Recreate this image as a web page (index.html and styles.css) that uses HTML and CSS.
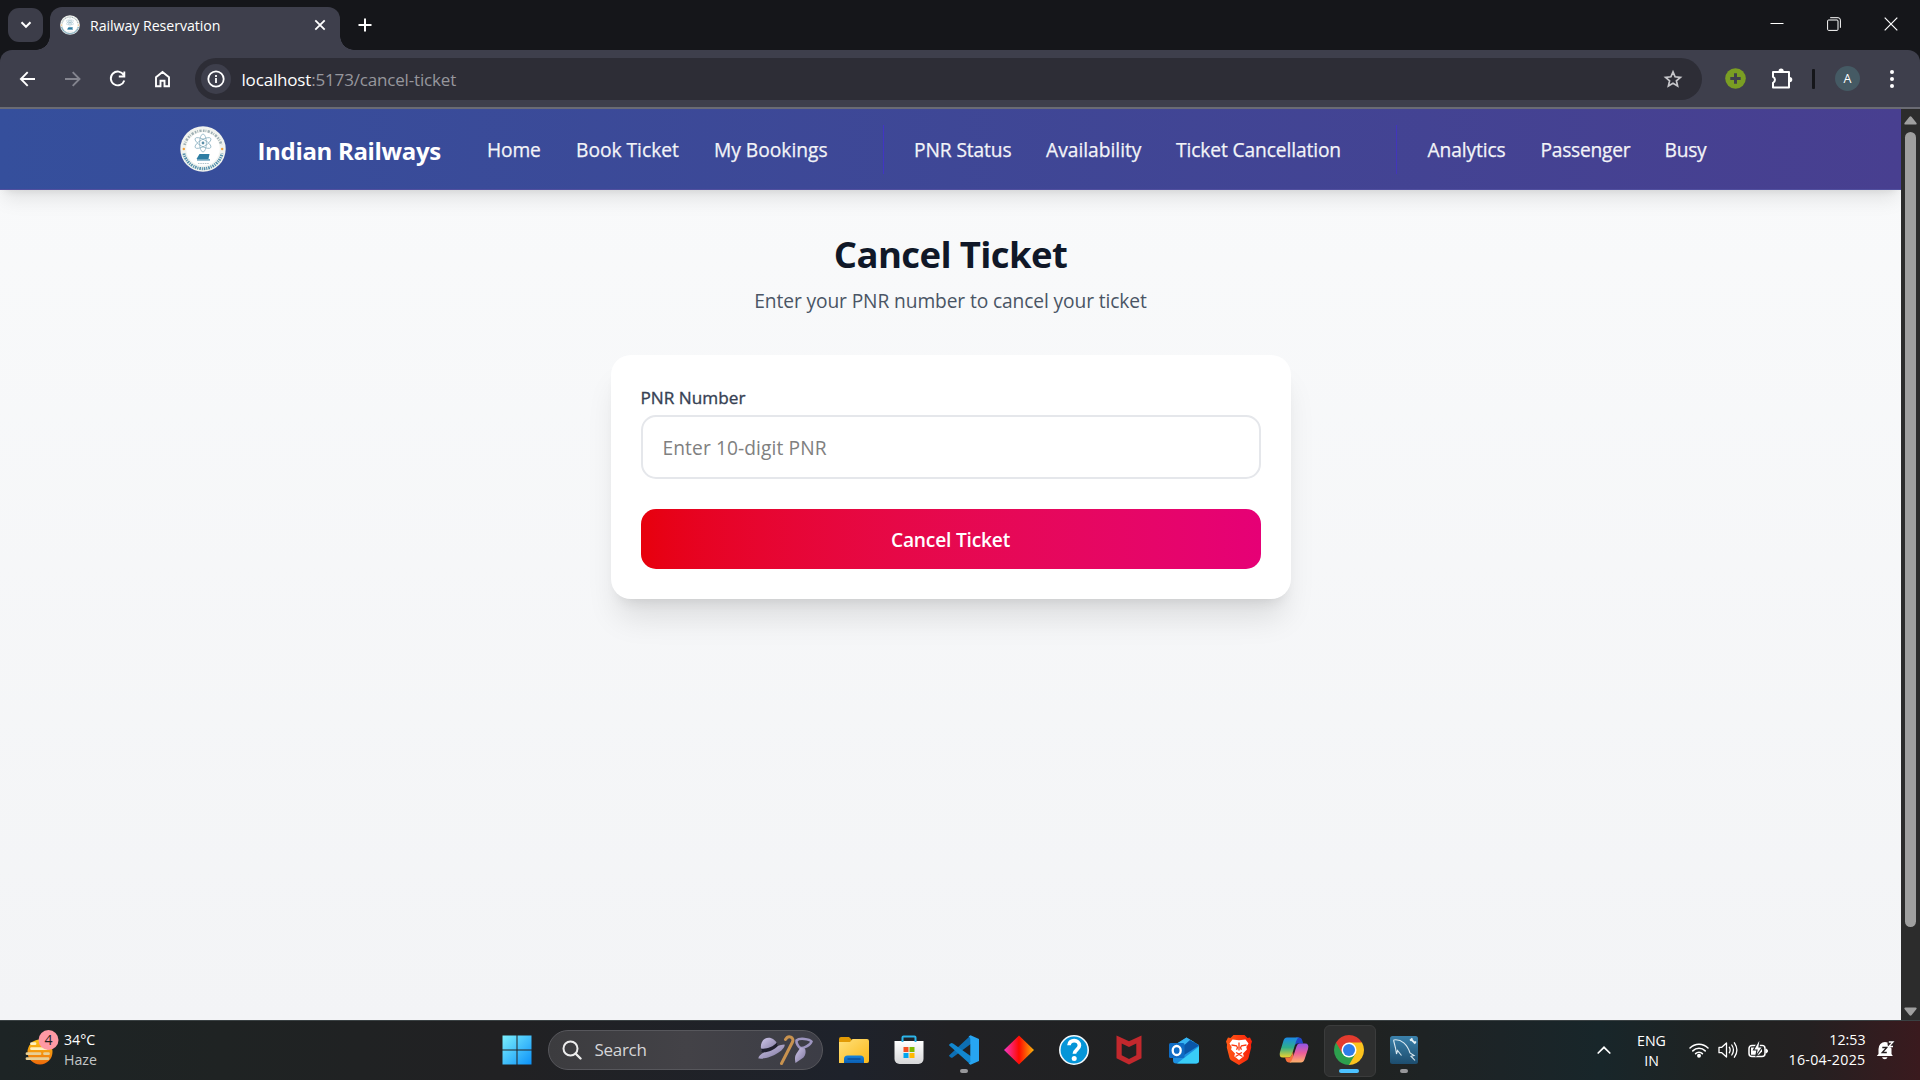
FILE: index.html
```html
<!DOCTYPE html>
<html lang="en">
<head>
<meta charset="utf-8">
<title>Railway Reservation</title>
<link rel="stylesheet" href="styles.css">
</head>
<body>
<svg class="defs" width="0" height="0" aria-hidden="true">
  <defs>
    <symbol id="seal" viewBox="0 0 46 46">
      <circle cx="23" cy="23" r="22.700" fill="#f1f3ef"/>
      <path d="M4.600 19A19 19 0 0 1 41.400 19" fill="none" stroke="#9fb0b5" stroke-width="2.600" stroke-dasharray="1.600 1 .8 1.300 2.200 1.400"/>
      <path d="M3.900 27.500A19.600 19.600 0 0 0 42.100 27.500" fill="none" stroke="#5490ac" stroke-width="3" stroke-dasharray="1.600 .9 1.100 .9"/>
      <circle cx="23" cy="23" r="16.800" fill="#fff"/>
      <circle cx="3.800" cy="23" r="1.200" fill="#f0a03c"/><circle cx="42.200" cy="23" r="1.200" fill="#f0a03c"/>
      <g fill="none" stroke="#7fa9bb" stroke-width=".7">
        <ellipse cx="23" cy="17" rx="3.400" ry="9"/>
        <ellipse cx="23" cy="17" rx="3.400" ry="9" transform="rotate(60 23 17)"/>
        <ellipse cx="23" cy="17" rx="3.400" ry="9" transform="rotate(-60 23 17)"/>
      </g>
      <circle cx="23" cy="17" r="1.400" fill="#5b8fa8"/>
      <path d="M19.500 28h10l-1 5h-12z" fill="#2d7da3"/><path d="M17 33.300h13v1.200H17z" fill="#2d7da3"/>
      <path d="M18 37.500h11" stroke="#a9bec6" stroke-width=".9" stroke-dasharray="1.500 .8"/>
    </symbol>
  </defs>
</svg>

<div class="tabstrip">
  <div class="tab-search"><svg width="12" height="8" viewBox="0 0 12 8"><path d="M1.500 1.300 6 5.800l4.500-4.500" fill="none" stroke="#fff" stroke-width="2"/></svg></div>
  <div class="tab">
    <svg class="favicon" width="20" height="20"><use href="#seal"/></svg>
    <span class="tab-title">Railway Reservation</span>
    <svg class="tab-close" width="12" height="12" viewBox="0 0 12 12"><path d="M1.300 1.300l9.400 9.400M10.700 1.300l-9.400 9.400" stroke="#fff" stroke-width="1.800"/></svg>
  </div>
  <svg class="new-tab" width="14" height="14" viewBox="0 0 14 14"><path d="M7 .5v13M.5 7h13" stroke="#fff" stroke-width="2"/></svg>
  <div class="window-buttons">
    <svg width="14" height="14" viewBox="0 0 14 14"><path d="M.5 6.500h13" stroke="#fff"/></svg>
    <svg width="14" height="14" viewBox="0 0 14 14" fill="none" stroke="#fff"><rect x=".6" y="3" width="10.400" height="10.400" rx="1"/><path d="M3.200.7h7.800a2.400 2.400 0 0 1 2.400 2.400v7.700"/></svg>
    <svg width="14" height="14" viewBox="0 0 14 14"><path d="M.7.7l12.600 12.600M13.300.7.7 13.300" stroke="#fff" stroke-width="1.200"/></svg>
  </div>
</div>

<div class="toolbar">
  <div class="nav-buttons">
    <svg width="20" height="20" viewBox="0 0 20 20"><path d="M17 10H3.500M9.700 3.200 2.900 10l6.800 6.800" fill="none" stroke="#fff" stroke-width="1.900"/></svg>
    <svg width="20" height="20" viewBox="0 0 20 20"><path d="M2 10h14M9.700 3.200l6.800 6.800-6.800 6.800" fill="none" stroke="#84858f" stroke-width="1.900"/></svg>
    <svg width="20" height="20" viewBox="0 0 20 20"><path d="M15.700 6A6.900 6.900 0 1 0 16.300 11.500M16.300 2.500v5h-5.500" fill="none" stroke="#fff" stroke-width="1.900"/></svg>
    <svg width="20" height="20" viewBox="0 0 20 20"><path d="M3 17.300V8.200L9.500 3 16 8.200v9.100h-4.500v-5.500h-4v5.500z" fill="none" stroke="#fff" stroke-width="1.900"/></svg>
  </div>
  <div class="omnibox">
    <div class="site-info"><svg width="18" height="18" viewBox="0 0 18 18"><circle cx="9" cy="9" r="7.700" fill="none" stroke="#fff" stroke-width="1.800"/><path d="M9 8v5M9 5v2" stroke="#fff" stroke-width="1.800"/></svg></div>
    <span class="url">localhost<span class="path">:5173/cancel-ticket</span></span>
    <svg class="star" width="20" height="20" viewBox="0 0 20 20"><path d="M10 2.900l2.100 4.900 5.300.5-4 3.500 1.200 5.200-4.600-2.800L5.400 17l1.200-5.200-4-3.500 5.300-.5z" fill="none" stroke="#c6c6ca" stroke-width="1.700"/></svg>
  </div>
  <svg class="ext-plus" width="21" height="21" viewBox="0 0 21 21"><circle cx="10.500" cy="10.500" r="10.300" fill="#7a9e23"/><path d="M10.500 5.300v10.400M5.300 10.500h10.400" stroke="#3f404c" stroke-width="3"/></svg>
  <svg class="ext-puzzle" width="22" height="22" viewBox="0 0 22 22"><path d="M2 3.900h16V19.500H2v-4.700a3.200 3.200 0 0 0 0-5.900z" fill="none" stroke="#fff" stroke-width="2" stroke-linejoin="round"/><path d="M7.500 3.200a2.600 2.600 0 0 1 5.200 0zM18.700 9a2.600 2.600 0 0 1 0 5.200z" fill="#fff"/></svg>
  <span class="divider"></span>
  <span class="avatar">A</span>
  <svg class="kebab" width="6" height="20" viewBox="0 0 6 20" fill="#fff"><circle cx="3" cy="3" r="2"/><circle cx="3" cy="10" r="2"/><circle cx="3" cy="17" r="2"/></svg>
</div>

<div class="viewport">
  <div class="page">
    <header class="site-header">
      <svg class="logo" width="46" height="46"><use href="#seal"/></svg>
      <span class="brand">Indian Railways</span>
      <nav class="nav-group nav-main"><a class="snug">Home</a><a>Book Ticket</a><a>My Bookings</a></nav>
      <nav class="nav-group nav-tickets"><a class="snug">PNR Status</a><a>Availability</a><a class="snug">Ticket Cancellation</a></nav>
      <nav class="nav-group nav-extra"><a class="snug">Analytics</a><a class="tight">Passenger</a><a class="tight">Busy</a></nav>
    </header>
    <main class="content">
      <h1 class="title">Cancel Ticket</h1>
      <p class="subtitle">Enter your PNR number to cancel your ticket</p>
      <form class="card">
        <label class="label">PNR Number</label>
        <div class="input">Enter 10-digit PNR</div>
        <button class="submit" type="button">Cancel Ticket</button>
      </form>
    </main>
  </div>
  <div class="scrollbar">
    <svg width="13" height="9" viewBox="0 0 13 9"><path d="M5.300 1q1.200-1.600 2.400 0l4.800 6q.5 1.500-1 1.500h-10q-1.500 0-1-1.500z" fill="#9f9f9f"/></svg>
    <span class="thumb"></span>
    <svg class="down" width="13" height="9" viewBox="0 0 13 9"><path d="M5.300 8q1.200 1.600 2.400 0l4.800-6q.5-1.500-1-1.500h-10q-1.500 0-1 1.500z" fill="#9f9f9f"/></svg>
  </div>
</div>

<footer class="taskbar">
  <div class="weather">
    <svg width="36" height="36" viewBox="0 0 36 36">
      <defs><linearGradient id="sun" x1="0" y1="0" x2="0" y2="1"><stop offset="0" stop-color="#fbc414"/><stop offset="1" stop-color="#ee6a0c"/></linearGradient></defs>
      <circle cx="16" cy="22" r="12.500" fill="url(#sun)"/>
      <g stroke-width="2.800" stroke-linecap="round"><path d="M7.500 13.700h3.500M7.500 18.700h15" stroke="#fff1bd"/><path d="M3 23.700h13M20.500 23.700h4M3 28.700h21" stroke="#e8cf96"/></g>
      <circle cx="24.500" cy="10" r="10" fill="#ff99a4"/>
      <text x="24.500" y="15" text-anchor="middle" class="badge-text">4</text>
    </svg>
    <div class="weather-text"><span>34°C</span><span class="haze">Haze</span></div>
  </div>

  <div class="apps">
    <svg class="start" width="30" height="30" viewBox="0 0 30 30"><defs><linearGradient id="win" gradientUnits="userSpaceOnUse" x1="0" y1="0" x2="30" y2="30"><stop offset="0" stop-color="#7df1fd"/><stop offset="1" stop-color="#0a90f8"/></linearGradient></defs><path d="M.5.500h14v14H.5zM15.500.500h14v14h-14zM.5 15.500h14v14H.5zM15.500 15.500h14v14h-14z" fill="url(#win)"/></svg>
    <div class="search">
      <svg width="20" height="20" viewBox="0 0 20 20"><circle cx="8.500" cy="8.500" r="7" fill="none" stroke="#ededed" stroke-width="2"/><path d="M13.500 13.500l5 5" stroke="#ededed" stroke-width="2.400" stroke-linecap="round"/></svg>
      <span class="search-text">Search</span>
      <svg class="search-art" width="58" height="32" viewBox="0 0 58 32">
        <defs><linearGradient id="hat" x1="0" y1="0" x2="1" y2="1"><stop offset="0" stop-color="#cfc6ea"/><stop offset="1" stop-color="#7d769c"/></linearGradient></defs>
        <path d="M2.500 24.500C1 20 22 10.500 28.500 10.500c2 4.500-14 15.500-26 14z" fill="url(#hat)"/>
        <path d="M5.500 17C1.500 3 17-1 21.500 10.800 18 15 10 18.500 5.500 17z" fill="url(#hat)"/>
        <path d="M5 14.500c5 1 12-1.500 16-6l.8 3.500C18 16 10 19.500 5.500 18z" fill="#20202e"/>
        <path d="M25.500 29.500 36.500 8c2-4.500-4-7.500-7-2.500" fill="none" stroke="#c8924f" stroke-width="3" stroke-linecap="round"/>
        <path d="M40.500 6.500c3-3 13-1.500 15 1-1 4-8.500 7-11 6.500-2-1-4.500-5-4-7.500z" fill="none" stroke="#9d95bf" stroke-width="2.600"/>
        <path d="M44.500 13.500l4.500 1c1 3 1 6-1.500 9l-8 5.500c-1-5-.5-7 1-9.500z" fill="url(#hat)"/>
      </svg>
    </div>
    <svg class="app" width="32" height="32" viewBox="0 0 32 32"><defs><linearGradient id="fold" x1="0" y1="0" x2="1" y2="1"><stop offset="0" stop-color="#ffe07a"/><stop offset="1" stop-color="#fbb91a"/></linearGradient><linearGradient id="foldb" x1="0" y1="0" x2="0" y2="1"><stop offset="0" stop-color="#1683dc"/><stop offset="1" stop-color="#0b5fb4"/></linearGradient></defs><path d="M1 5a2 2 0 0 1 2-2h8l3 3-3 5H1z" fill="#e29a05"/><path d="M1 8h11l2.500-3H29a2 2 0 0 1 2 2v20a2 2 0 0 1-2 2H1z" fill="url(#fold)"/><path d="M6 29v-4a3.500 3.500 0 0 1 3.500-3.500h13A3.500 3.500 0 0 1 26 25v4z" fill="url(#foldb)"/><path d="M9.500 25h13" stroke="#0a4a94" stroke-width="1.300"/></svg>
    <svg class="app" width="32" height="32" viewBox="0 0 32 32"><defs><linearGradient id="bag" x1="0" y1="0" x2="0" y2="1"><stop offset="0" stop-color="#fff"/><stop offset="1" stop-color="#d6d6d8"/></linearGradient></defs><path d="M1.500 7h29v18a5 5 0 0 1-5 5h-19a5 5 0 0 1-5-5z" fill="url(#bag)"/><path d="M9.500 8V3.500q0-1 1-1h11q1 0 1 1V8" fill="none" stroke="#2cb5ea" stroke-width="2"/><path d="M10.500 13h5v5h-5z" fill="#f25022"/><path d="M16.500 13h5v5h-5z" fill="#7fba00"/><path d="M10.500 19h5v5h-5z" fill="#00a4ef"/><path d="M16.500 19h5v5h-5z" fill="#ffb900"/></svg>
    <div class="app running"><svg width="32" height="32" viewBox="0 0 32 32"><path d="M1.300 21.300 22 2l2 7L5 23.300q-1.500 1-2.500 0l-1.200-1q-.6-.5 0-1z" fill="#0d6fb4"/><path d="M1.300 11.500 22 30l2-7L5 9.500q-1.500-1-2.500 0l-1.200 1q-.6.500 0 1z" fill="#1287cf"/><path d="M22.500 1.200 31 5v22l-8.500 3.800-2-1.300q1.800 0 1.800-2V5q0-2-1.800-2.500z" fill="#27a5f2"/></svg></div>
    <svg class="app" width="32" height="32" viewBox="0 0 32 32"><defs><linearGradient id="dia"><stop offset="0" stop-color="#f437c8"/><stop offset=".5" stop-color="#ff0a00"/><stop offset="1" stop-color="#f9b40a"/></linearGradient></defs><path d="M16 1.500 31 16 16 30.500 1 16z" fill="url(#dia)"/></svg>
    <svg class="app" width="32" height="32" viewBox="0 0 32 32"><circle cx="16" cy="16" r="14.200" fill="#0595d8" stroke="#f3f8fb" stroke-width="1.600"/><path d="M11 11.300c0-6.300 10.400-6.300 10.400.2 0 4-5 4.200-5 8.300" fill="none" stroke="#fff" stroke-width="3.700"/><circle cx="16.200" cy="24.500" r="2.500" fill="#fff"/></svg>
    <svg class="app" width="32" height="32" viewBox="0 0 32 32"><path d="M3.500 1.500 16 7.300 28.500 1.500V24.300L16 30.500 3.500 24.300zM8.700 9.500v11.700L16 25l7.300-3.800V9.500L16 13z" fill="#c2282d" fill-rule="evenodd"/></svg>
    <svg class="app" width="32" height="32" viewBox="0 0 32 32"><path d="M5 12 18.500 3.500 31 11v15.500a3 3 0 0 1-3 3H8a3 3 0 0 1-3-3z" fill="#1c8fe0"/><path d="M5 12 18.500 3.500 26 8 10 18z" fill="#36b5f2"/><path d="M22 6 31 11.500 13 23V14z" fill="#0a56a8"/><path d="M31 12.500V26.500a3 3 0 0 1-3 3H9z" fill="#39cdf7"/><rect x="1" y="9" width="15.500" height="15" rx="1.500" fill="#0f6cc4"/><ellipse cx="8.700" cy="16.500" rx="4" ry="4.500" fill="none" stroke="#fff" stroke-width="2.300"/></svg>
    <svg class="app" width="32" height="32" viewBox="0 0 32 32"><defs><linearGradient id="brave"><stop offset="0" stop-color="#ff5a16"/><stop offset="1" stop-color="#f8200a"/></linearGradient></defs><path d="M10.500 1h11l3 3 2.500-.5 2 4-1 3 .2 3-2.700 10.500q-.5 1.500-2 2.500L16 31l-7.500-4.500q-1.500-1-2-2.500L3.800 13.500l.2-3-1-3 2-4 2.500.5z" fill="url(#brave)"/><path d="M16 6.300 22.500 5.500l3 4-2.200 3.500.6 2.500-3.900 4 .8 2.700L16 26l-4.800-3.800.8-2.700-3.900-4 .6-2.500-2.200-3.500 3-4z" fill="#fff"/><path d="M8.500 11l5 .8 1 2-1 2M23.500 11l-5 .8-1 2 1 2M16 8.500v8M13 18.500l3 1.500 3-1.500M12.500 22.500l3.500-2 3.500 2" fill="none" stroke="#fb3b12" stroke-width="1.300"/></svg>
    <svg class="app" width="32" height="32" viewBox="0 0 32 32"><defs><linearGradient id="cpa" x1="0" y1="0" x2="0" y2="1"><stop offset="0" stop-color="#1b8ae8"/><stop offset=".5" stop-color="#2fae8a"/><stop offset="1" stop-color="#f0d22e"/></linearGradient><linearGradient id="cpb" x1="0" y1="0" x2="0" y2="1"><stop offset="0" stop-color="#8f55ea"/><stop offset=".5" stop-color="#ec5d9a"/><stop offset="1" stop-color="#fdb26a"/></linearGradient></defs><path d="M18 3.500h3q2.500 0 3.300 3l.9 3H19l-3 2z" fill="#2047c8"/><path d="M9 3.500h12q-2 .5-3 4l-4 13q-.9 3-3.500 3H5q-4.500 0-3-5.500l3.500-11.500q1-3 3.500-3z" fill="url(#cpa)"/><path d="M13 28.500h-2q-2.500 0-3.300-3l-.7-2h4q2 0 3-3l1-3 1 8z" fill="#f5703c"/><path d="M21.500 9.500H27q4.500 0 3 5.500L26.500 25.500q-1 3-3.500 3H11.500q2-.5 3-4l4-12q.9-3 3-3z" fill="url(#cpb)"/></svg>
    <div class="app running active"><svg width="32" height="32" viewBox="0 0 32 32"><path d="M16 16 3.010 8.500A15 15 0 0 1 28.990 8.500z" fill="#e33b2e"/><path d="M16 16 28.990 8.500A15 15 0 0 1 16 31z" fill="#fcc31e"/><path d="M16 16 16 31A15 15 0 0 1 3.010 8.500z" fill="#2da04e"/><path d="M16 8.500h13L22.500 19.800z" fill="#fcc31e"/><path d="M3.010 8.500 9.500 19.800 16 8.500z" fill="#e33b2e"/><path d="M9.500 19.800 16 31l6.500-11.200z" fill="#2da04e"/><circle cx="16" cy="16" r="7.500" fill="#fff"/><circle cx="16" cy="16" r="6" fill="#2f7de9"/></svg></div>
    <div class="app running"><svg width="32" height="32" viewBox="0 0 32 32"><defs><linearGradient id="sql" x1="0" y1="0" x2="0" y2="1"><stop offset="0" stop-color="#3b81ab"/><stop offset="1" stop-color="#1d4d6e"/></linearGradient></defs><rect x="2" y="2" width="28" height="28" rx="2.500" fill="url(#sql)"/><path d="M5.500 6c8-1.500 14 5 16.500 13l4 2.500-3 .7 4 4.300M5.500 6l2 8 1 6 1-3.500 4 5" fill="none" stroke="#d9e8f0" stroke-width="1.100"/><path d="M22.500 5l5 4.500M22 6.500l2.500-2M26 9.500l2-2" stroke="#e8f2f7" stroke-width="1.700"/></svg></div>
  </div>

  <div class="tray">
    <svg class="chev" width="14" height="8" viewBox="0 0 14 8"><path d="M1.200 7 7 1.300 12.800 7" fill="none" stroke="#fff" stroke-width="1.700" stroke-linecap="round"/></svg>
    <div class="lang"><span>ENG</span><span>IN</span></div>
    <svg class="wifi" width="20" height="16" viewBox="0 0 20 16" fill="none" stroke="#fff" stroke-width="1.500" stroke-linecap="round"><path d="M1 6a12.700 12.700 0 0 1 18 0M3.800 8.900a8.800 8.800 0 0 1 12.400 0M6.600 11.600a4.800 4.800 0 0 1 6.800 0"/><circle cx="10" cy="13.700" r="1.200" fill="#fff"/></svg>
    <svg class="vol" width="20" height="18" viewBox="0 0 20 18" fill="none" stroke="#fff" stroke-width="1.300" stroke-linecap="round" stroke-linejoin="round"><path d="M1 6.300h2.800L8.500 2v14l-4.700-4.300H1zM11.300 6.200q1.700 2.800 0 5.600M13.800 4q3.300 5 0 10M16.400 1.800q5 7.200 0 14.400"/></svg>
    <svg class="batt" width="20" height="18" viewBox="0 0 20 18"><rect x="1" y="4.500" width="16" height="11" rx="3" fill="none" stroke="#fff" stroke-width="1.500"/><path d="M3 6.500h11v4l-3 3.200H3z" fill="#fff"/><path d="M18 8v4q1.500-.3 1.500-2t-1.500-2z" fill="#fff" stroke="#fff"/><path d="M10.800-.5 5.500 9H9l-1.300 6.500L14.500 6H11l1-6.500z" fill="#fff" stroke="#25282a" stroke-width="1.200"/></svg>
    <div class="clock"><span>12:53</span><span class="date">16-04-2025</span></div>
    <svg class="bell" width="20" height="20" viewBox="0 0 20 20"><path d="M2.500 9a6.500 7 0 0 1 13 0v5l1.300 2H.8l1.700-2z" fill="#fff"/><path d="M6 17.200h5.500q-.6 2-2.700 2T6 17.200z" fill="#fff"/><path d="M6.300 7.500h4.500l-4.500 5h4.500" fill="none" stroke="#231d1f" stroke-width="1.400"/><circle cx="15.300" cy="3.800" r="3.800" fill="#2a1d20"/><path d="M12.800 2h4.200l-4.200 4.500h4.200" fill="none" stroke="#fff" stroke-width="1.300"/></svg>
  </div>
</footer>
</body>
</html>
```
FILE: styles.css
```css
* { box-sizing: border-box; margin: 0; padding: 0; }
body {
  display: flex; flex-direction: column;
  width: 1920px; height: 1080px; overflow: hidden;
  font-family: "Open Sans", "Noto Sans", sans-serif; color: #fff; background: #15161a;
  white-space: nowrap;
}
svg { display: block; flex: none; }
.defs { position: absolute; }

.tabstrip { display: flex; align-items: flex-start; height: 50px; flex: none; background: #15161a; padding-left: 8px; }
.tab-search { display: grid; place-items: center; width: 35px; height: 34px; margin-top: 8px; border-radius: 11px; background: #3c3d49; }
.tab {
  position: relative; display: flex; align-items: center; width: 290px; height: 43px; margin: 7px 0 0 7px;
  padding: 0 14px 7px 10px; border-radius: 12px 12px 0 0; background: #3e3f4c;
}
.tab::before, .tab::after { content: ""; position: absolute; bottom: 0; width: 14px; height: 14px; }
.tab::before { left: -14px; background: radial-gradient(circle at 0 0, transparent 13.5px, #3e3f4c 14px); }
.tab::after { right: -14px; background: radial-gradient(circle at 100% 0, transparent 13.5px, #3e3f4c 14px); }
.tab-title { margin-left: 10px; padding-top: 1px; font-size: 14.200px; letter-spacing: -.06px; }
.tab-close { margin-left: auto; }
.new-tab { margin: 18px 0 0 18px; }
.window-buttons { display: flex; gap: 43px; margin: 17px 22px 0 auto; }

.toolbar {
  display: flex; align-items: center; height: 59px; flex: none; padding: 0 25px 0 18px;
  background: #3e3f4c; border-bottom: 2px solid #6a6b74; border-radius: 12px 12px 0 0;
}
.nav-buttons { display: flex; gap: 25px; }
.omnibox { display: flex; align-items: center; width: 1507px; height: 42px; margin-left: 22px; padding-left: 6px; border-radius: 21px; background: #2d2d36; font-size: 17px; letter-spacing: -.17px; }
.site-info { display: grid; place-items: center; width: 30px; height: 30px; margin-right: 10.500px; border-radius: 50%; background: #3e3f4c; }
.url { padding-top: 1px; }
.path { color: #97979d; }
.star { margin: 0 19px 0 auto; }
.ext-plus { margin-left: 23px; }
.ext-puzzle { margin-left: 25px; }
.divider { width: 3px; height: 20px; margin-left: 19px; background: #15161a; border-radius: 1px; }
.avatar { display: grid; place-items: center; width: 25px; height: 25px; margin-left: 20px; border-radius: 50%; background: #455a64; font-size: 12.500px; }
.kebab { margin-left: auto; }

.viewport { display: flex; height: 911px; flex: none; }
.page { width: 1901px; background: linear-gradient(#f9fafb, #f3f4f6); overflow: hidden; }
.site-header {
  display: flex; align-items: center; height: 81px; padding-left: 180px;
  background: linear-gradient(90deg, #354f9c, #483f90); border-bottom: 1px solid #514f9f;
  box-shadow: 0 12px 19px -4px rgba(0,0,0,.1), 0 5px 8px -5px rgba(0,0,0,.1);
}
.brand { width: 198px; margin-left: 31.500px; padding-top: 2px; font-size: 24px; font-weight: 700; letter-spacing: -.33px; }
.nav-group {
  display: grid; column-gap: 35px; align-items: center; height: 49px;
  font-size: 19.200px; font-weight: 500; color: #f3f4f8; -webkit-text-stroke: .25px #f3f4f8;
}
.nav-main { grid-template-columns: 54px 103px 114px; padding-left: 31.500px; }
.nav-tickets { grid-template-columns: 97px 95px 165px; margin-left: 54.500px; padding-left: 30.500px; border-left: 1px solid rgba(67,45,215,.7); }
.nav-extra { grid-template-columns: 78px 89px 42px; margin-left: 54.500px; padding-left: 31px; border-left: 1px solid rgba(67,45,215,.6); }
.snug { letter-spacing: -.11px; }
.tight { letter-spacing: -.25px; }

.content { display: flex; flex-direction: column; align-items: center; padding-top: 40px; }
.title { font-size: 36.500px; line-height: 49px; font-weight: 700; letter-spacing: -.62px; color: #101828; }
.subtitle { margin-top: 7px; font-size: 19.200px; line-height: 30px; letter-spacing: -.11px; color: #4a5565; }
.card {
  width: 680px; height: 244px; margin-top: 39px; padding: 30px; border-radius: 20px; background: #fff;
  box-shadow: 0 25px 31px -6px rgba(0,0,0,.1), 0 10px 13px -8px rgba(0,0,0,.1);
}
.label { display: block; height: 30px; font-size: 17.200px; line-height: 26px; font-weight: 500; color: #364153; -webkit-text-stroke: .35px #364153; }
.input { height: 64px; padding: 0 20px; border: 2px solid #e5e7eb; border-radius: 15px; font-size: 19.200px; line-height: 61px; letter-spacing: .09px; color: #808080; }
.submit {
  display: block; width: 100%; height: 60px; margin-top: 30px; border: 0; border-radius: 15px;
  background: linear-gradient(90deg in oklab, #e7000b, #e60076); color: #fff;
  font: 600 19.200px/62px "Open Sans", "Noto Sans", sans-serif; letter-spacing: -.2px;
}

.scrollbar { display: flex; flex-direction: column; align-items: center; width: 19px; padding: 7px 0 4px; background: #2c2c2c; }
.thumb { width: 11px; height: 795px; margin-top: 7px; border-radius: 6px; background: #9f9f9f; }
.down { margin-top: auto; }

.taskbar {
  display: flex; align-items: center; height: 60px; flex: none; padding-bottom: 2px; border-top: 1px solid #3a4143;
  background: linear-gradient(90deg, #1d2425 0, #1f2323 220px, #212123 500px, #1e222b 850px, #212124 950px, #202221 1350px, #1c2427 1500px, #18262a 1600px, #202221 1730px, #242021 1810px, #3a1a1e 1920px);
}
.weather { display: flex; width: 502px; padding-left: 24px; }
.weather-text { display: flex; flex-direction: column; margin-left: 4px; font-size: 14.200px; line-height: 20px; }
.haze { color: #c3c6c7; }
.badge-text { font-size: 14px; fill: #1f1f1f; }
.apps { display: flex; align-items: center; }
.start { margin-right: 16px; }
.search { display: flex; align-items: center; width: 275px; height: 40px; margin-right: 15px; padding: 0 8px 0 13px; border: 1px solid #57575c; border-radius: 20px; background: linear-gradient(90deg, #3c3c3f, #434247 50%, #3c3d46); font-size: 17px; color: #d6d6d8; }
.search-text { margin-left: 12.500px; letter-spacing: -.3px; }
.search-art { margin-left: auto; }
.app { width: 32px; height: 32px; margin-right: 23px; }
.running { position: relative; }
.running svg { position: relative; }
.running::after { content: ""; position: absolute; left: 12px; top: 35px; width: 8px; height: 4px; border-radius: 2px; background: #97979a; }
.active::before { content: ""; position: absolute; left: -9px; top: -9px; width: 50px; height: 50px; border: 1px solid #3b3c3c; border-radius: 6px; background: #2e2f2f; }
.active::after { left: 6px; width: 20px; background: #4cc2ff; }
.tray { display: flex; align-items: center; margin-left: auto; padding-right: 24px; font-size: 14.200px; line-height: 20px; }
.lang { display: flex; flex-direction: column; align-items: center; width: 29px; margin: 2px 23px 0 26px; }
.vol { margin-left: 9px; }
.batt { margin-left: 9.500px; }
.clock { display: flex; flex-direction: column; align-items: flex-end; width: 78px; margin: 0 10.500px 0 20px; }
.date { letter-spacing: .3px; }
```
